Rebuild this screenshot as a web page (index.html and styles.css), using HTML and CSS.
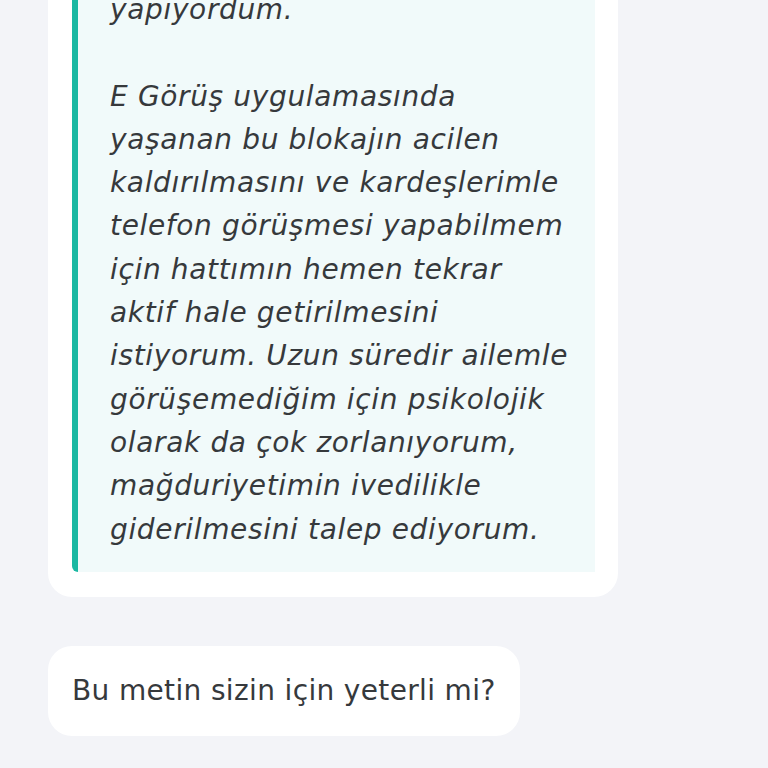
FILE: index.html
```html
<!DOCTYPE html>
<html lang="tr">
<head>
<meta charset="utf-8">
<link rel="stylesheet" href="styles.css">
</head>
<body>
<main class="thread">
  <article class="card">
    <blockquote class="quote">
      <p>yapıyordum.</p>
      <p>E Görüş uygulamasında<br>yaşanan bu blokajın acilen<br>kaldırılmasını ve kardeşlerimle<br>telefon görüşmesi yapabilmem<br>için hattımın hemen tekrar<br>aktif hale getirilmesini<br>istiyorum. Uzun süredir ailemle<br>görüşemediğim için psikolojik<br>olarak da çok zorlanıyorum,<br>mağduriyetimin ivedilikle<br>giderilmesini talep ediyorum.</p>
    </blockquote>
  </article>
  <div class="bubble">Bu metin sizin için yeterli mi?</div>
</main>
</body>
</html>
```

FILE: styles.css
```css
html, body {
  margin: 0;
  padding: 0;
  background: #f3f4f8;
  height: 100%;
  overflow: hidden;
}
.thread {
  padding-left: 48px;
  display: flex;
  flex-direction: column;
  align-items: flex-start;
  font-family: "DejaVu Sans", "Open Sans", sans-serif;
  color: #36393c;
}
.card {
  margin-top: -56px;
  width: 570px;
  box-sizing: border-box;
  background: #ffffff;
  border-radius: 24px;
  padding: 24px 23px 25px 24px;
}
.quote {
  margin: 0;
  background: #f1fafa;
  border-left: 6px solid #1ab8a2;
  border-radius: 6px 0 0 6px;
  padding: 20px 10px 21px 32px;
  font-style: italic;
  font-size: 28px;
  letter-spacing: 0.65px;
  line-height: 43.3px;
  white-space: nowrap;
}
.quote p {
  margin: 0 0 43.3px 0;
}
.quote p:last-child {
  margin-bottom: 0;
}
.bubble {
  margin-top: 49px;
  background: #ffffff;
  border-radius: 24px;
  padding: 24px 24px;
  font-size: 28px;
  letter-spacing: 0.35px;
  line-height: 42px;
}
```
